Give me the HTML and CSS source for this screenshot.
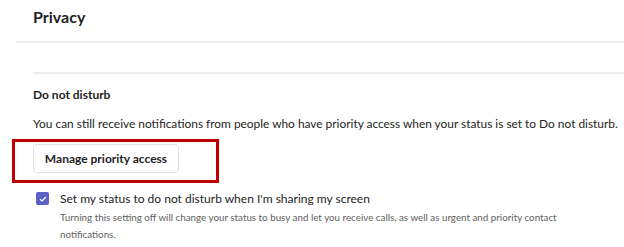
FILE: index.html
```html
<!DOCTYPE html>
<html lang="en">
<head>
    <meta charset="UTF-8">
    <title>Privacy</title>
    <link rel="stylesheet" href="styles.css">
</head>
<body>
    <div class="page">
        <h1 class="title">Privacy</h1>
        <div class="rule rule-wide"></div>
        <div class="rule rule-inner"></div>

        <section class="section">
            <h2 class="section-title">Do not disturb</h2>
            <p class="section-text">You can still receive notifications from people who have priority access when your status is set to Do not disturb.</p>

            <div class="highlight">
                <button class="btn">Manage priority access</button>
            </div>

            <div class="option">
                <span class="checkbox">
                    <svg width="8" height="6" viewBox="0 0 8 6"><path d="M1 3.2 L3 5 L7 1" fill="none" stroke="#fff" stroke-width="1.2"/></svg>
                </span>
                <div class="option-body">
                    <div class="option-label">Set my status to do not disturb when I'm sharing my screen</div>
                    <div class="option-hint">Turning this setting off will change your status to busy and let you receive calls, as well as urgent and priority contact notifications.</div>
                </div>
            </div>
        </section>
    </div>
</body>
</html>
```

FILE: styles.css
```css
body {
    margin: 0;
    background: #fff;
    font-family: Lato, "Noto Sans", Arial, sans-serif;
    color: #242424;
}
.page {
    padding-top: 6px;
}
.title {
    margin: 0 0 0 33px;
    font-size: 16px;
    font-weight: 700;
    line-height: 22px;
}
.rule {
    height: 2px;
    background: #ececec;
}
.rule-wide {
    margin: 13px 0 0 16px;
}
.rule-inner {
    margin: 29px 0 0 33px;
}
.section {
    padding-left: 33px;
}
.section-title {
    margin: 13px 0 0;
    font-size: 12px;
    font-weight: 700;
    line-height: 16px;
}
.section-text {
    margin: 13px 0 0;
    font-size: 11.9px;
    line-height: 16px;
    white-space: nowrap;
}
.highlight {
    margin: 7px 0 0 -21px;
    width: 183px;
    border: 3px solid #c00000;
    padding: 2px 0 7px 18px;
}
.btn {
    display: block;
    width: 146px;
    height: 29px;
    border: 1px solid #e0e0e0;
    border-radius: 4px;
    background: #fff;
    font-family: inherit;
    font-size: 12px;
    font-weight: 700;
    color: #242424;
    padding: 0;
}
.option {
    display: flex;
    gap: 11px;
    margin: 9px 0 0 3px;
}
.checkbox {
    flex: none;
    width: 13px;
    height: 13px;
    border-radius: 2px;
    background: #5b5fc7;
    display: flex;
    align-items: center;
    justify-content: center;
}
.option-label {
    font-size: 12px;
    line-height: 14px;
}
.option-hint {
    margin-top: 3px;
    font-size: 9.8px;
    line-height: 17px;
    color: #616161;
    max-width: 530px;
}
```
